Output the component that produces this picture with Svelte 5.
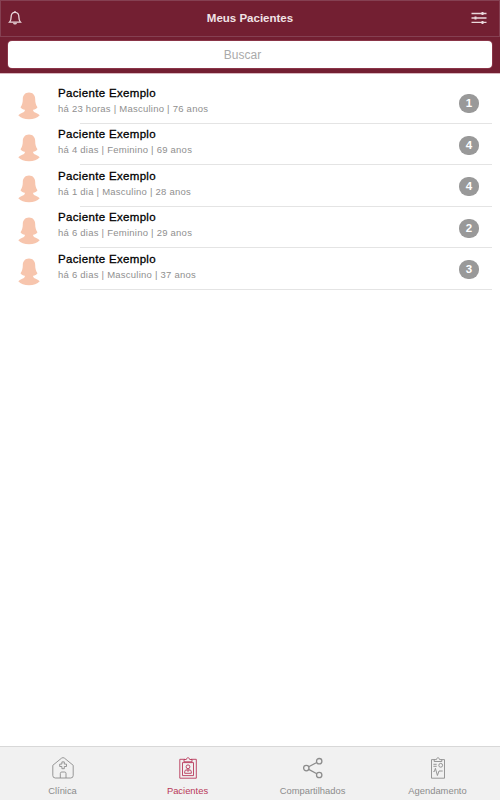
<script lang="ts">
  const patients = [
    { name: 'Paciente Exemplo', info: 'há 23 horas | Masculino | 76 anos', count: 1 },
    { name: 'Paciente Exemplo', info: 'há 4 dias | Feminino | 69 anos', count: 4 },
    { name: 'Paciente Exemplo', info: 'há 1 dia | Masculino | 28 anos', count: 4 },
    { name: 'Paciente Exemplo', info: 'há 6 dias | Feminino | 29 anos', count: 2 },
    { name: 'Paciente Exemplo', info: 'há 6 dias | Masculino | 37 anos', count: 3 },
  ];

  const tabs = [
    { id: 'clinic', label: 'Clínica' },
    { id: 'patients', label: 'Pacientes' },
    { id: 'shared', label: 'Compartilhados' },
    { id: 'schedule', label: 'Agendamento' },
  ];

  let active = $state('patients');
</script>

<div class="app">
  <header>
    <div class="bar">
      <button class="icon" aria-label="Notificações">
        <svg width="14" height="16" viewBox="0 0 14 16">
          <path d="M1.5 12.2h11c-1.5-1.400-1.600-2.600-1.600-4.900C10.900 4.300 9.700 2.300 7 2.300S3.100 4.300 3.100 7.300c0 2.300-.1 3.500-1.600 4.900z" />
          <path d="M7 2.300V1M5.700 12.800c.2 1.500 2.400 1.500 2.600 0" />
        </svg>
      </button>
      <h1>Meus Pacientes</h1>
      <button class="icon" aria-label="Filtros">
        <svg width="16" height="14" viewBox="0 0 16 14">
          <path d="M.5 2.500h15M.5 7h15M.5 11.400h15" />
          <path class="knob" d="M10.500 2.500h2M3.500 7h2M10.500 11.400h2" />
        </svg>
      </button>
    </div>
    <div class="search">
      <input type="text" placeholder="Buscar" />
    </div>
  </header>

  <ul class="list">
    {#each patients as patient}
      <li>
        <svg class="avatar" width="22" height="28" viewBox="0 0 22 28">
          <path
            d="M11 .5c4 0 6.200 2.900 6.200 6.700 0 3.500.6 5.400 2.300 8-1 1.500-2.500 2.200-4.300 2.500v1.200c1.300 1.900 4.700 2.300 6.500 4.300C19.500 26 15.500 27.300 11 27.300S2.500 26 .3 23.200c1.800-2 5.200-2.400 6.500-4.300v-1.200c-1.800-.3-3.300-1-4.300-2.500 1.700-2.600 2.300-4.500 2.300-8C4.800 3.400 7 .5 11 .5z"
          />
        </svg>
        <div class="row">
          <div class="text">
            <span class="name">{patient.name}</span>
            <span class="info">{patient.info}</span>
          </div>
          <span class="badge">{patient.count}</span>
        </div>
      </li>
    {/each}
  </ul>

  <nav>
    {#each tabs as tab}
      <button class="tab" class:active={active === tab.id} onclick={() => (active = tab.id)}>
        <svg width="24" height="24" viewBox="0 0 24 24">
          {#if tab.id === 'clinic'}
            <path d="M1.800 9.300 10.500 2.200q1.500-1.200 3 0l8.700 7.100v10.200q0 2.500-2.500 2.500H4.300q-2.500 0-2.500-2.500z" />
            <path d="M9.300 22v-4.500q0-1.500 1.500-1.500h2.700q1.500 0 1.500 1.500V22" />
            <path d="M10.900 5.900h2.400v2.200h2.200v2.400h-2.200v2.200h-2.400v-2.200H8.700V8.100h2.200z" />
          {:else if tab.id === 'patients'}
            <path d="M9 3.300H3.800v18.900h16.500V3.300H15" />
            <path d="M6.500 6.600h11v13h-11zM8 5.800h8V3.500h-2.300c-.2-2.300-3.200-2.300-3.400 0H8z" />
            <circle cx="12" cy="10.800" r="1.900" />
            <path d="M8.700 17.300v-1.500q0-2 2-2h2.600q2 0 2 2v1.500zM10.700 14l1.300 1.500 1.300-1.500" />
          {:else if tab.id === 'shared'}
            <g class="heavy">
              <circle cx="5.300" cy="12.100" r="2.700" />
              <circle cx="18.200" cy="5.200" r="2.700" />
              <circle cx="18.200" cy="19" r="2.700" />
              <path d="M7.700 10.800 15.800 6.500M7.700 13.400l8.100 4.300" />
            </g>
          {:else}
            <path d="M8.700 3.600H5.500v18.600h13V3.600h-3.200" />
            <path d="M8.200 5.500h7.600V3.600h-2.200c-.2-2.400-3-2.400-3.200 0H8.200z" />
            <path d="M7.400 8.300h3.300M7.400 10.300h3.300M7.400 15.500h1l1-3.200 2 7.200 1.600-4.500h3.700" />
            <circle cx="14.700" cy="9.300" r="1.900" />
          {/if}
        </svg>
        <span>{tab.label}</span>
      </button>
    {/each}
  </nav>
</div>

<style>
  :global(body) {
    margin: 0;
  }
  .app {
    display: flex;
    flex-direction: column;
    height: 800px;
    background: #fff;
    font-family: 'Liberation Sans', Arial, sans-serif;
  }
  button {
    padding: 0;
    border: 0;
    background: none;
    color: inherit;
    font-family: inherit;
  }
  svg {
    display: block;
    fill: none;
    stroke: currentColor;
  }
  header {
    box-sizing: border-box;
    height: 74px;
    background: #731f32;
    border-bottom: 1px solid #d9b7bf;
  }
  .bar {
    box-sizing: border-box;
    display: grid;
    grid-template-columns: 1fr auto 1fr;
    align-items: center;
    height: 37px;
    padding: 0 12px 1px 7px;
    border: 1px solid #854052;
    color: #ead8dc;
  }
  .icon:last-child {
    justify-self: end;
  }
  .bar svg {
    stroke-width: 1.3;
  }
  .bar .knob {
    stroke-width: 3;
  }
  h1 {
    margin: 0;
    padding-left: 5px;
    font-size: 11.5px;
    line-height: 14px;
    font-weight: bold;
    color: #f1e3e6;
  }
  .search {
    padding: 4px 8px 0;
  }
  input {
    box-sizing: border-box;
    display: block;
    width: 100%;
    height: 27px;
    padding: 0 15px 0 0;
    border: 0;
    border-radius: 4px;
    background: #fff;
    box-shadow: 0 0 0 1px #8a3548;
    font: 12px 'Liberation Sans', Arial, sans-serif;
    text-align: center;
  }
  input::placeholder {
    color: #aaa;
    opacity: 1;
  }
  .list {
    flex: 1;
    margin: 0;
    padding: 8px 8px 0 18px;
    list-style: none;
  }
  li {
    display: flex;
    gap: 18px;
    height: 41.6px;
  }
  .avatar {
    flex: none;
    margin-top: 10px;
    fill: #f7c5ad;
    stroke: none;
  }
  .row {
    flex: 1;
    box-sizing: border-box;
    display: flex;
    justify-content: space-between;
    padding: 3.6px 13px 0 0;
    background: linear-gradient(#e4e4e4, #e4e4e4) 100% 100% / calc(100% - 22px) 1px no-repeat;
  }
  .text {
    display: flex;
    flex-direction: column;
  }
  .name {
    font-size: 11.5px;
    line-height: 15px;
    color: #000;
    letter-spacing: 0.33px;
    -webkit-text-stroke: 0.3px #000;
  }
  .info {
    font-size: 9.5px;
    line-height: 16px;
    color: #8f8f8f;
    letter-spacing: 0.24px;
  }
  .badge {
    width: 20px;
    height: 19px;
    margin-top: 8.400px;
    border-radius: 9px;
    background: #999;
    color: #fff;
    font-size: 11.5px;
    font-weight: bold;
    line-height: 19px;
    text-align: center;
  }
  nav {
    box-sizing: border-box;
    display: grid;
    grid-template-columns: repeat(4, 1fr);
    height: 54px;
    border-top: 1px solid #d8d8d8;
    background: #f1f1f1;
  }
  .tab {
    display: flex;
    flex-direction: column;
    align-items: center;
    gap: 5px;
    padding-top: 9px;
    color: #8c8c8c;
    font-size: 9.4px;
    line-height: 12px;
  }
  .tab svg {
    stroke-width: 0.9;
  }
  .heavy {
    stroke-width: 1.3;
  }
  .tab.active {
    color: #b8385a;
  }
</style>
